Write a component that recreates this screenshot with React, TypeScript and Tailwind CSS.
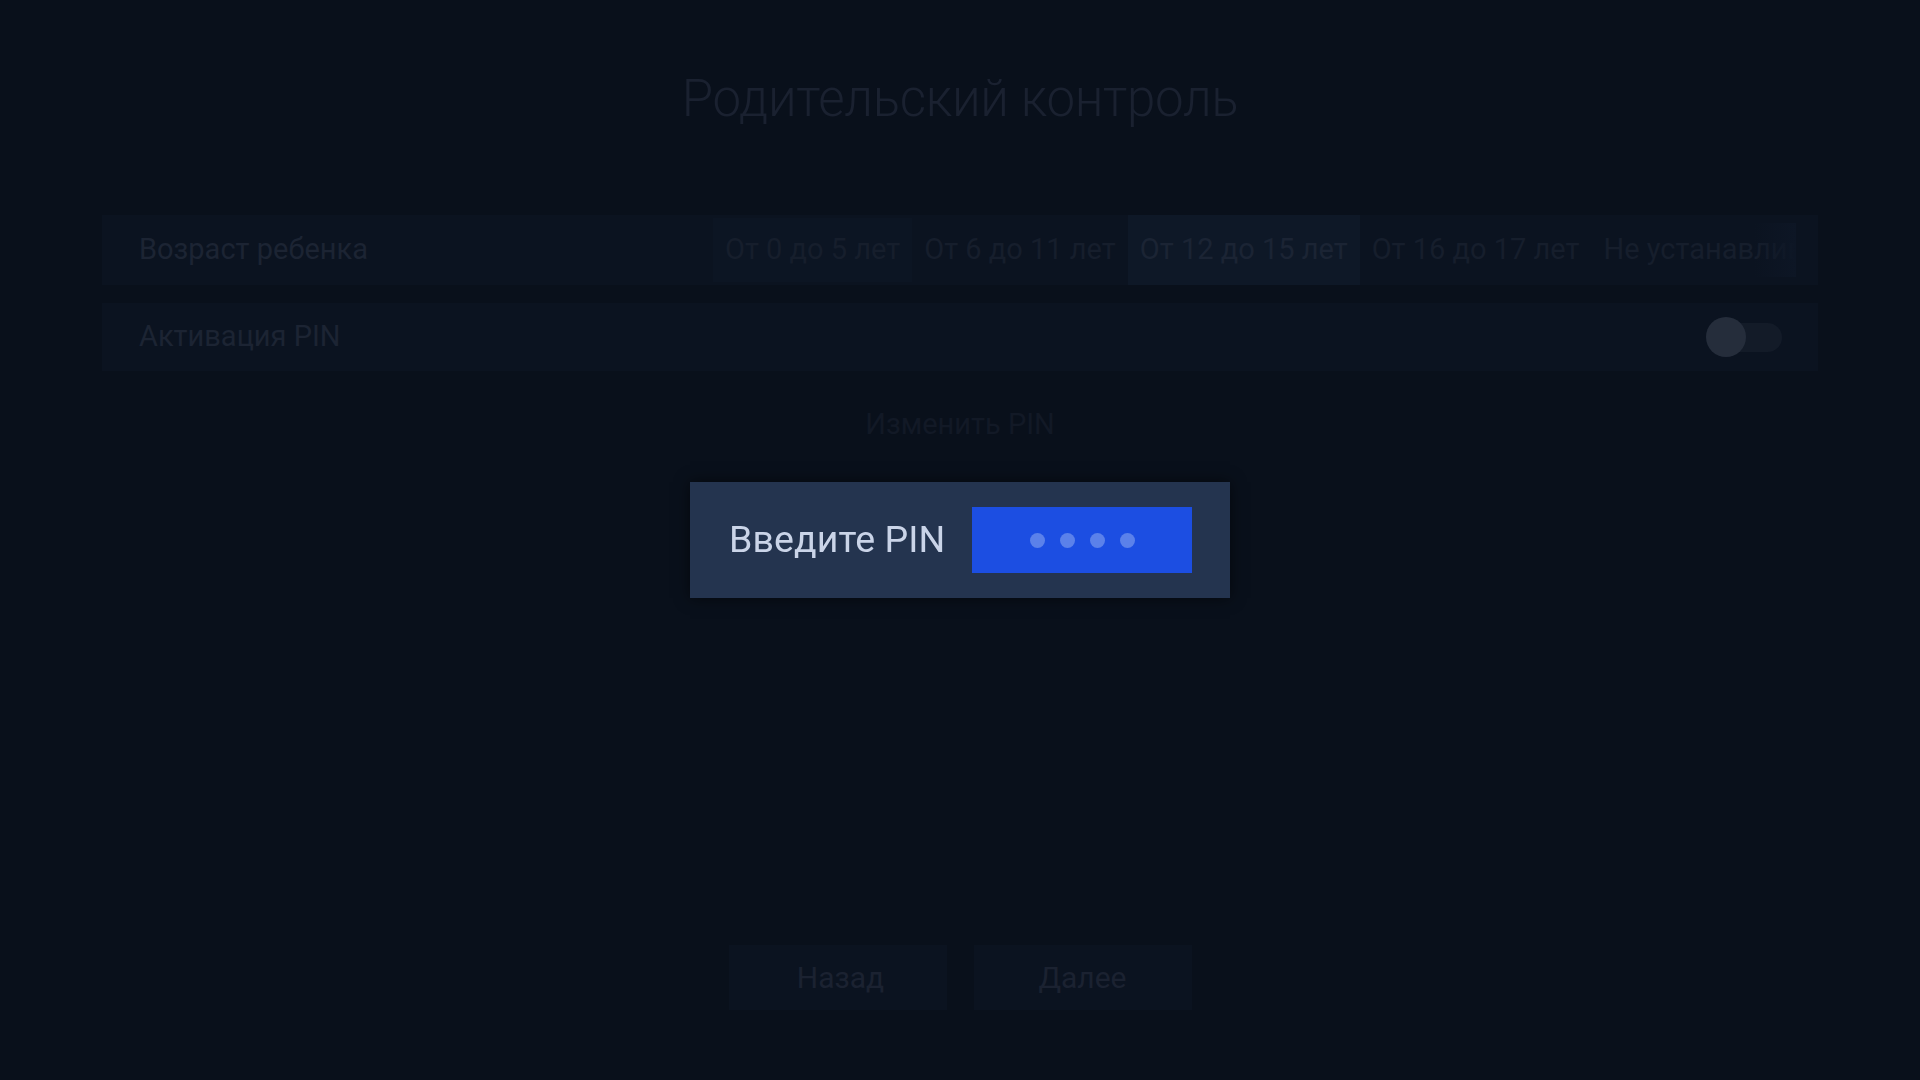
const ages = [
  { label: 'От 0 до 5 лет', tone: 'first' },
  { label: 'От 6 до 11 лет', tone: 'plain' },
  { label: 'От 12 до 15 лет', tone: 'selected' },
  { label: 'От 16 до 17 лет', tone: 'plain' },
  { label: 'Не устанавливать', tone: 'plain' },
]

const optionClass: Record<string, string> = {
  first: 'my-[3px] bg-[#0c1523] text-[#161e2c]',
  plain: 'text-[#161e2c]',
  selected: 'bg-[#0e1827] text-[#1b2434]',
}

function PinDialog() {
  return (
    <div className="fixed inset-0 flex items-center justify-center">
      <div className="flex h-[116px] w-[540px] items-center gap-[27px] bg-[#24344f] pl-[39px] shadow-[0_0_14px_rgba(0,0,0,0.55)]">
        <span className="text-[37.5px] leading-none tracking-[0.1px] text-[#cad4e8]">Введите PIN</span>
        <div className="flex h-[66px] w-[220px] items-center justify-center gap-[15px] bg-[#1c4ee2]">
          {[0, 1, 2, 3].map((i) => (
            <span key={i} className="h-[15px] w-[15px] rounded-full bg-[#5b81ea]" />
          ))}
        </div>
      </div>
    </div>
  )
}

export default function App() {
  return (
    <div className="relative flex h-[1080px] w-[1920px] flex-col overflow-hidden bg-[#09101b] font-['Roboto',sans-serif]">
      <h1 className="mt-[73px] text-center text-[51px] font-light leading-[52px] tracking-[-0.3px] text-[#1a2130]">
        Родительский контроль
      </h1>

      <div className="mt-[90px] flex flex-col px-[102px]">
        <div className="flex h-[70px] items-stretch bg-[#0b1320]">
          <div className="flex flex-1 items-center pl-[37px] text-[29px] text-[#1c2433]">Возраст ребенка</div>
          <div className="relative mr-[22px] flex w-[1083px] overflow-hidden">
            {ages.map((a) => (
              <div
                key={a.label}
                className={`flex shrink-0 items-center whitespace-nowrap px-[12px] text-[29px] ${optionClass[a.tone]}`}
              >
                {a.label}
              </div>
            ))}
            <div className="absolute inset-y-[8px] right-0 w-[42px] bg-gradient-to-r from-transparent to-[#0d1625]" />
          </div>
        </div>

        <div className="mt-[18px] flex h-[68px] items-center justify-between bg-[#0b1320] pl-[37px] pr-[36px]">
          <span className="text-[29px] text-[#1c2433]">Активация PIN</span>
          <div className="relative flex h-[40px] w-[76px] items-center">
            <div className="ml-[14px] h-[29px] w-[62px] rounded-full bg-[#131b28]" />
            <div className="absolute left-0 top-0 h-[40px] w-[40px] rounded-full bg-[#252d3b]" />
          </div>
        </div>

        <div className="mt-[19px] flex h-[70px] items-center justify-center">
          <span className="text-[29px] text-[#121926]">Изменить PIN</span>
        </div>
      </div>

      <div className="flex-1" />

      <div className="mb-[70px] flex justify-center gap-[27px]">
        <button type="button" className="flex h-[65px] w-[218px] items-center justify-center bg-[#0b1320] pl-[6px] text-[30px] text-[#1b2231]">
          Назад
        </button>
        <button type="button" className="flex h-[65px] w-[218px] items-center justify-center bg-[#0b1320] text-[30px] text-[#1b2231]">
          Далее
        </button>
      </div>

      <PinDialog />
    </div>
  )
}
